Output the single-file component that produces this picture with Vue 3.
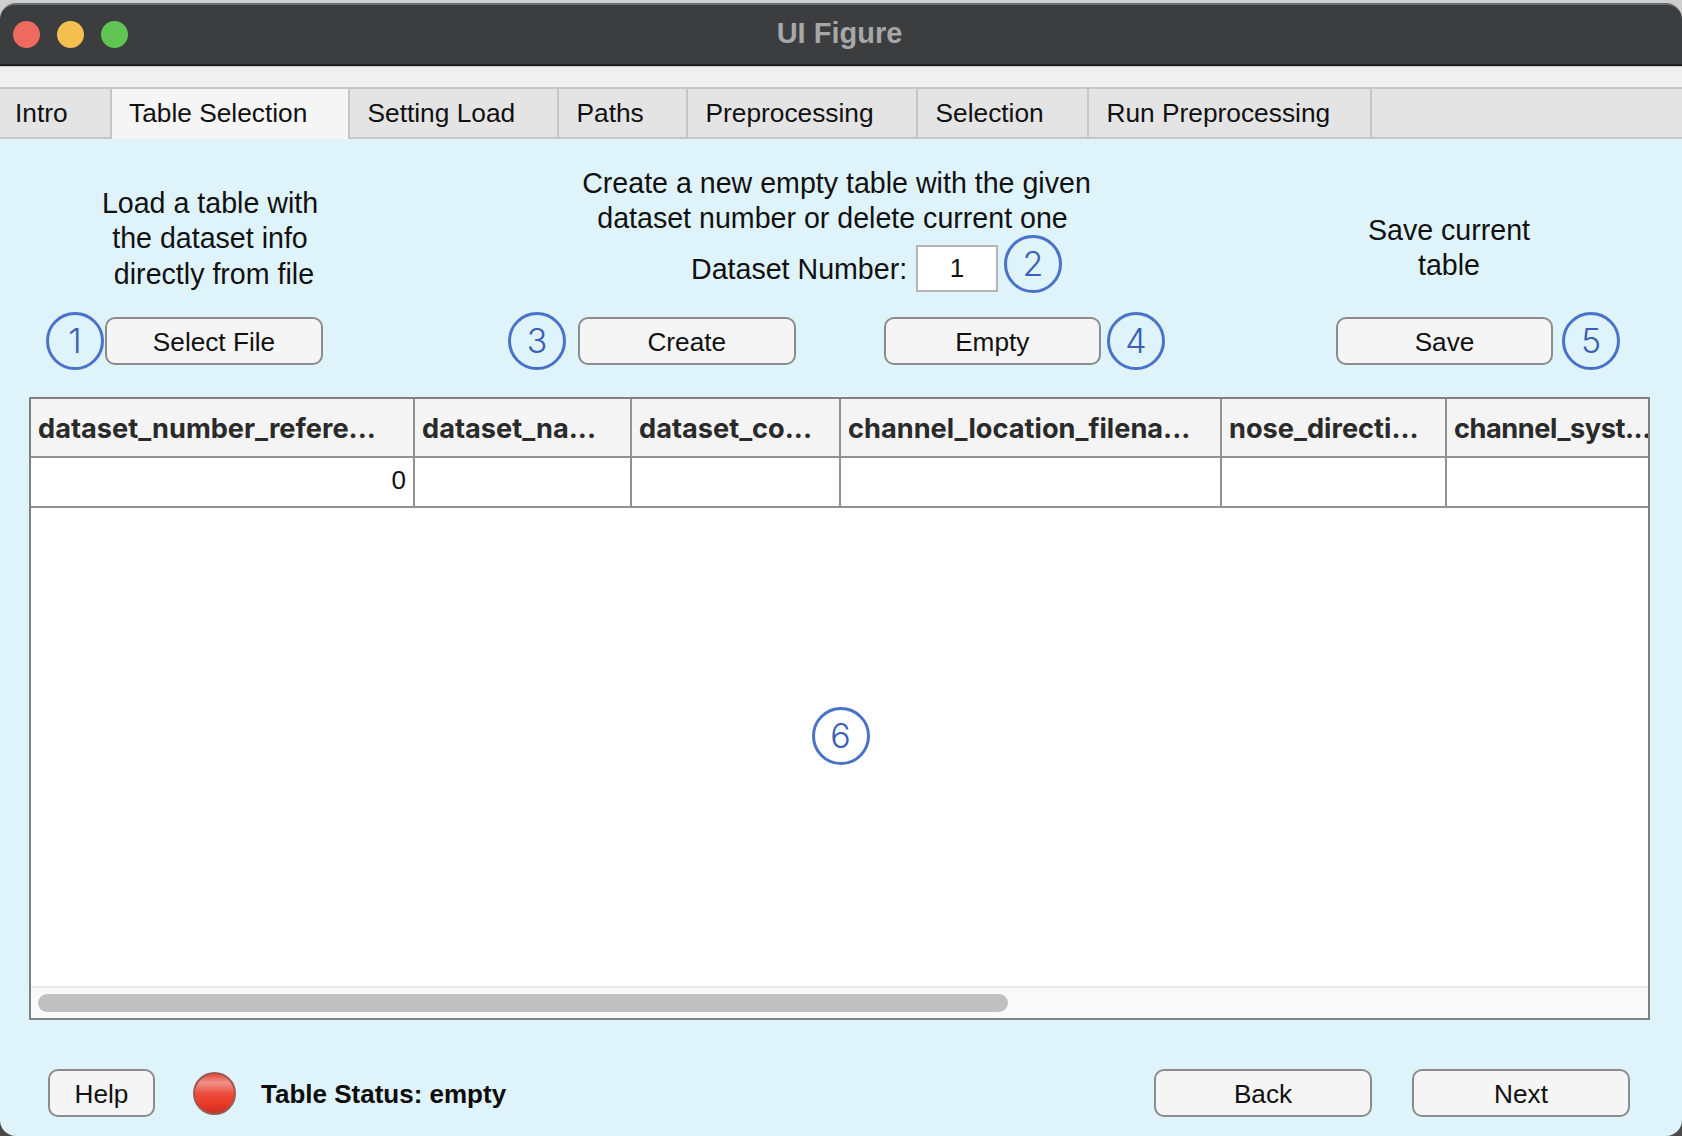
<script setup>
const tabs = [
  { name: 'Intro', width: 112 },
  { name: 'Table Selection', width: 238, active: true },
  { name: 'Setting Load', width: 209 },
  { name: 'Paths', width: 129 },
  { name: 'Preprocessing', width: 230 },
  { name: 'Selection', width: 171 },
  { name: 'Run Preprocessing', width: 283 },
]
const columns = [
  { name: 'dataset_number_refere...', width: 384, value: '0' },
  { name: 'dataset_na...', width: 217 },
  { name: 'dataset_co...', width: 209 },
  { name: 'channel_location_filena...', width: 381 },
  { name: 'nose_directi...', width: 225 },
  { name: 'channel_syst...', width: 203 },
]
</script>

<template>
  <div class="page">
    <div class="window">
      <header class="titlebar">
        <div class="lights">
          <span class="light red"></span>
          <span class="light yellow"></span>
          <span class="light green"></span>
        </div>
        <span class="title">UI Figure</span>
      </header>
      <div class="band"></div>
      <nav class="tabs">
        <div
          v-for="tab in tabs"
          :key="tab.name"
          class="tab"
          :class="{ active: tab.active }"
          :style="{ width: tab.width + 'px' }"
        >{{ tab.name }}</div>
        <div class="tab filler"></div>
      </nav>
      <main class="pane">
        <section class="controls">
          <div class="group group-load">
            <p class="label load-label">Load a table with<br>the dataset info<br>&nbsp;directly from file</p>
            <div class="row">
              <span class="badge">1</span>
              <button class="btn load-btn">Select File</button>
            </div>
          </div>
          <div class="group group-create">
            <p class="label create-label">Create a new empty table with the given<br>dataset number or delete current one&nbsp;</p>
            <div class="number-row">
              <span class="number-label">Dataset Number:</span>
              <span class="number-input">1</span>
              <span class="badge">2</span>
            </div>
            <div class="row">
              <span class="badge">3</span>
              <button class="btn create-btn">Create</button>
              <button class="btn empty-btn">Empty</button>
              <span class="badge">4</span>
            </div>
          </div>
          <div class="group group-save">
            <p class="label save-label">Save current<br>table</p>
            <div class="row">
              <button class="btn">Save</button>
              <span class="badge save-badge">5</span>
            </div>
          </div>
        </section>

        <section class="table">
          <div class="thead">
            <div
              v-for="col in columns"
              :key="col.name"
              class="th"
              :style="{ width: col.width + 'px' }"
            >{{ col.name }}</div>
          </div>
          <div class="tr">
            <div
              v-for="col in columns"
              :key="col.name"
              class="td"
              :style="{ width: col.width + 'px' }"
            >{{ col.value }}</div>
          </div>
          <div class="tbody-empty">
            <span class="badge">6</span>
          </div>
          <div class="scrollbar"><div class="thumb"></div></div>
        </section>

        <footer class="footer">
          <button class="btn help-btn">Help</button>
          <span class="led"></span>
          <span class="status">Table Status: empty</span>
          <button class="btn back-btn">Back</button>
          <button class="btn next-btn">Next</button>
        </footer>
      </main>
    </div>
  </div>
</template>

<style scoped>
.page {
  width: 1682px;
  height: 1136px;
  overflow: hidden;
  background: linear-gradient(#cfcfcf 50%, #4a4a4a 50%);
  font-family: "Liberation Sans", Arial, sans-serif;
  color: #111;
}
.window {
  height: 100%;
  display: flex;
  flex-direction: column;
  padding-top: 3px;
  box-sizing: border-box;
}
.titlebar {
  height: 63px;
  box-sizing: border-box;
  background: #3c3d3f;
  border-top: 2px solid #6b6c6e;
  border-bottom: 2px solid #1f1f20;
  border-radius: 16px 16px 0 0;
  display: flex;
  align-items: center;
  justify-content: center;
  position: relative;
  padding: 0 3px 2px 0;
}
.lights {
  position: absolute;
  left: 13px;
  top: 16px;
  display: flex;
  gap: 17px;
}
.light {
  width: 27px;
  height: 27px;
  border-radius: 50%;
}
.red { background: #ee6a5f; }
.yellow { background: #f5bf4f; }
.green { background: #61c554; }
.title {
  font-size: 29px;
  font-weight: 700;
  color: #a6a7a8;
}
.band {
  height: 21px;
  background: #f0f0f0;
  border-top: 1px solid #c9c9c9;
  box-sizing: border-box;
}
.tabs {
  height: 52px;
  box-sizing: border-box;
  display: flex;
  background: #e4e4e4;
  border-top: 2px solid #c6c6c6;
  border-bottom: 2px solid #c6c6c6;
}
.tab {
  box-sizing: border-box;
  border-right: 2px solid #c6c6c6;
  padding-left: 17.5px;
  font-size: 26.3px;
  line-height: 49px;
  white-space: nowrap;
}
.tab:first-child {
  padding-left: 15px;
}
.tab.active {
  background: #f5f5f5;
  margin-bottom: -2px;
  padding-left: 17px;
}
.tab.filler {
  flex: 1;
  border-right: 0;
}
.pane {
  flex: 1;
  background: #dff3fb;
  border-radius: 0 0 16px 16px;
  padding-top: 27px;
  display: flex;
  flex-direction: column;
}
.controls {
  display: flex;
  align-items: flex-end;
  padding-left: 46px;
}
.group {
  display: flex;
  flex-direction: column;
}
.group-load { width: 277px; }
.group-create { width: 657px; margin-left: 185px; }
.group-save { width: 284px; margin-left: 171px; }
.label {
  margin: 0;
  font-size: 28.6px;
  line-height: 35px;
  text-align: center;
  white-space: nowrap;
}
.load-label {
  margin-left: 51px;
  margin-bottom: 20px;
  line-height: 35.4px;
}
.save-label {
  margin-right: 58px;
  margin-bottom: 29px;
}
.number-row {
  display: flex;
  align-items: center;
  height: 58px;
  margin-top: -1px;
  margin-bottom: 19px;
  padding-left: 183px;
}
.number-label {
  font-size: 28.6px;
  white-space: nowrap;
  width: 225px;
  padding-top: 10px;
}
.number-input {
  width: 82px;
  height: 47px;
  box-sizing: border-box;
  background: #fff;
  border: 2px solid #b5b5b5;
  font-size: 26px;
  line-height: 43px;
  text-align: center;
  margin-top: 8px;
  margin-right: 6px;
}
.row {
  display: flex;
  align-items: center;
  height: 58px;
}
.badge {
  width: 58px;
  height: 58px;
  box-sizing: border-box;
  flex: none;
  border: 3px solid #4a72c8;
  border-radius: 50%;
  background: transparent;
  color: #3a5fb4;
  font-family: Inter, "Liberation Sans", sans-serif;
  font-weight: 350;
  font-size: 34px;
  line-height: 52px;
  text-align: center;
}
.btn {
  width: 218px;
  height: 48px;
  box-sizing: border-box;
  background: #f5f5f5;
  border: 2px solid #8c8c8c;
  border-radius: 10px;
  font-family: inherit;
  font-size: 26.2px;
  color: #111;
  padding: 2px 0 0;
}
.load-btn { margin-left: 1px; }
.create-btn { margin-left: 12px; }
.empty-btn { margin-left: 88px; margin-right: 6px; }
.save-badge { margin-left: 9px; }
.table {
  width: 1621px;
  height: 623px;
  box-sizing: border-box;
  margin: 27px 0 0 29px;
  background: #fff;
  border: 2px solid #808080;
  display: flex;
  flex-direction: column;
  overflow: hidden;
}
.thead,
.tr {
  display: flex;
  flex: none;
  box-sizing: border-box;
  border-bottom: 2px solid #919191;
}
.thead {
  height: 59px;
  background: #f4f4f4;
}
.tr {
  height: 50px;
}
.th,
.td {
  box-sizing: border-box;
  flex: none;
  border-right: 2px solid #919191;
  white-space: nowrap;
  overflow: hidden;
}
.th:last-child,
.td:last-child {
  border-right: 0;
}
.th {
  padding-left: 7px;
  font-family: Inter, "Liberation Sans", sans-serif;
  font-size: 27.2px;
  font-weight: 700;
  line-height: 60px;
  color: #2a2a2a;
}
.th:last-child {
  letter-spacing: -0.45px;
}
.td {
  padding-right: 7px;
  font-size: 26px;
  line-height: 44px;
  text-align: right;
}
.tbody-empty {
  flex: 1;
  display: flex;
  justify-content: center;
  padding: 199px 0 0 2px;
}
.scrollbar {
  height: 32px;
  flex: none;
  box-sizing: border-box;
  background: #f9f9f9;
  border-top: 2px solid #e8e8e8;
  padding: 6px 0 0 7px;
}
.thumb {
  width: 970px;
  height: 18px;
  border-radius: 9px;
  background: #c0c0c0;
}
.footer {
  display: flex;
  align-items: center;
  margin-top: 49px;
  padding-left: 48px;
}
.help-btn { width: 107px; }
.led {
  width: 43px;
  height: 43px;
  box-sizing: border-box;
  border: 2px solid #9a5a54;
  border-radius: 50%;
  margin-left: 38px;
  background: linear-gradient(#e2473a 0%, #f09388 22%, #ec4d3e 50%, #ea3a27 75%, #c92f1e 100%);
}
.status {
  margin-left: 25px;
  padding-top: 2px;
  font-size: 26px;
  font-weight: 700;
  color: #0c0c0c;
}
.back-btn { margin-left: auto; }
.next-btn { margin-left: 40px; margin-right: 52px; }
</style>
